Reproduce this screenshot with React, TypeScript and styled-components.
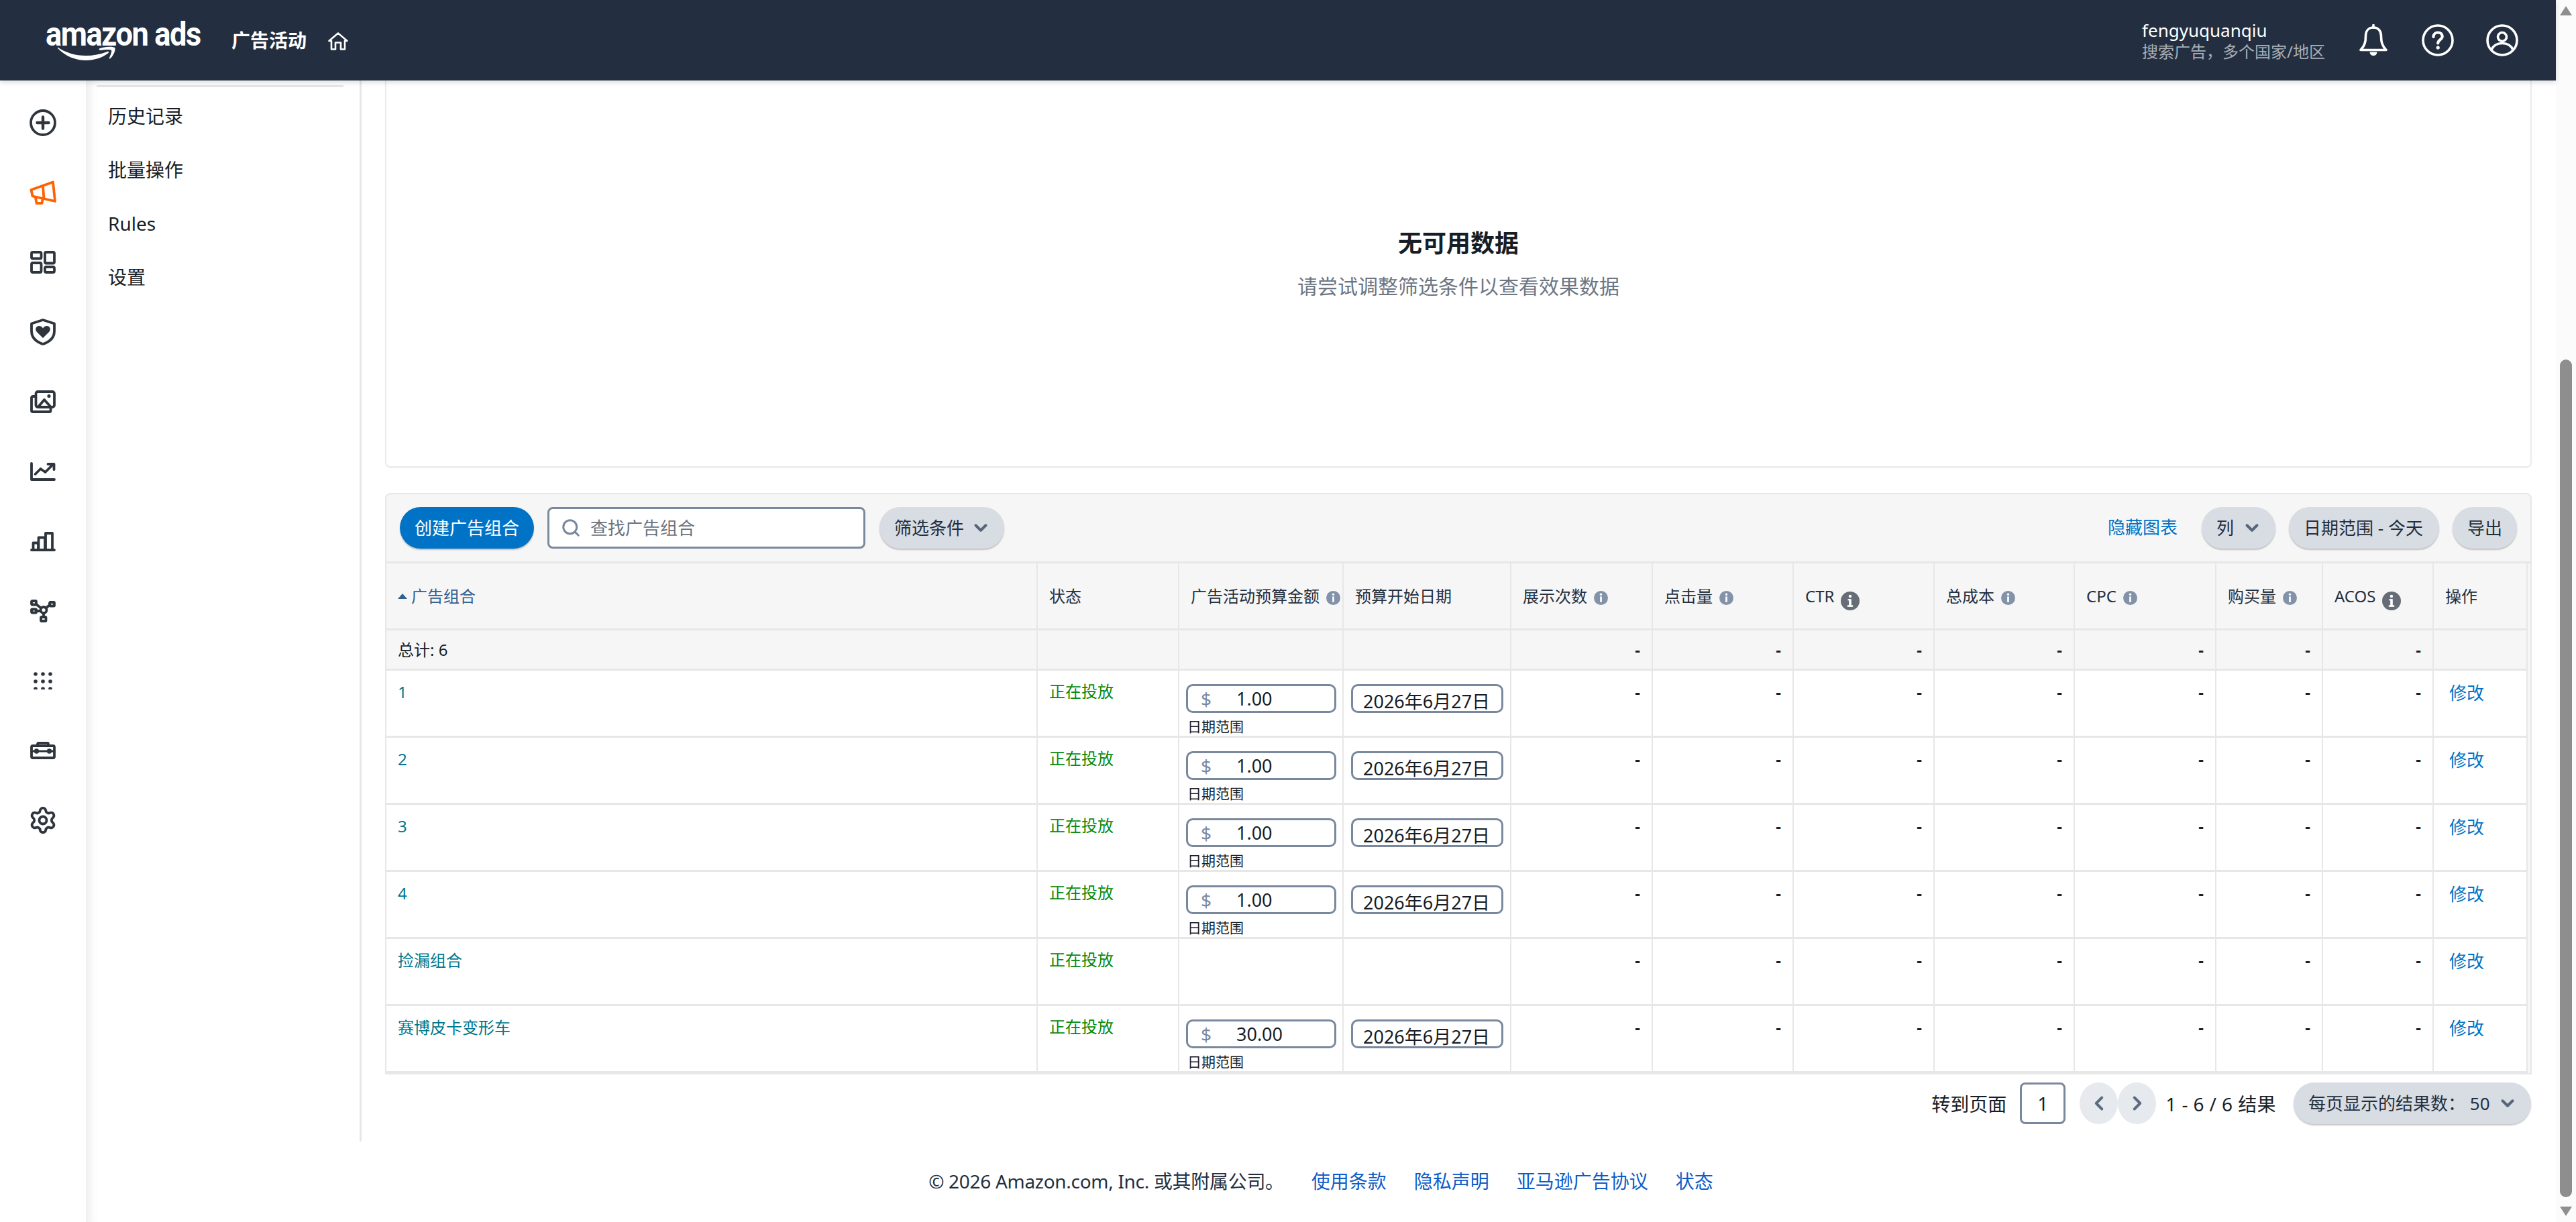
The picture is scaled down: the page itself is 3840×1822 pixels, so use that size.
import React from "react";
import styled, { createGlobalStyle } from "styled-components";
import { ChevronDown, ChevronLeft, ChevronRight, Search, Settings } from "lucide-react";

const Global = createGlobalStyle`
  html, body { margin: 0; padding: 0; height: 100%; overflow: hidden; background: #fff; }
  body { font-family: "Noto Sans", "Noto Sans CJK SC", sans-serif; color: #161d26; }
  * { box-sizing: border-box; }
`;

const INK = "#2f353d";
const SLATE = "#7a889e";

const Page = styled.div`
  display: flex;
  width: 3840px;
  height: 1822px;
  overflow: hidden;
`;
const Main = styled.div`
  display: flex;
  flex-direction: column;
  width: 3810px;
`;
const Header = styled.header`
  position: relative;
  z-index: 2;
  display: flex;
  align-items: center;
  height: 120px;
  flex: none;
  padding: 0 56px 0 68px;
  background: #232f40;
  box-shadow: 0 3px 7px rgba(0, 0, 0, 0.14);
  color: #fff;
`;
const Logo = styled.div`
  display: flex;
  flex-direction: column;
  width: 231px;
  margin-top: -2px;
`;
const LogoWord = styled.span`
  font-family: Roboto, "Noto Sans", sans-serif;
  font-weight: 700;
  font-size: 50px;
  line-height: 50px;
  letter-spacing: -1.6px;
  white-space: nowrap;
  transform: scaleX(0.905);
  transform-origin: left center;
`;
const LogoSmile = styled.svg`
  display: block;
  width: 86px;
  height: 23px;
  margin: -7px 0 0 18px;
`;
const Section = styled.span`
  margin-left: 46px;
  font-size: 28px;
  font-weight: 700;
  line-height: 38px;
`;
const HomeIcon = styled.svg`
  width: 30px;
  height: 27px;
  margin: 2px 0 0 32px;
`;
const HeaderSpacer = styled.div`
  flex: 1;
`;
const Account = styled.div`
  display: flex;
  flex-direction: column;
  margin-right: 51px;
  margin-top: 1px;
`;
const AccountName = styled.span`
  font-size: 26px;
  line-height: 32px;
`;
const AccountSub = styled.span`
  font-size: 24px;
  line-height: 32px;
  color: #a9aeb5;
`;
const HeadIcon = styled.svg<{ $w: number; $gap?: number }>`
  width: ${(p) => p.$w}px;
  height: 48px;
  margin-left: ${(p) => p.$gap ?? 0}px;
`;

const Body = styled.div`
  display: flex;
  flex: 1;
  min-height: 0;
`;
const Rail = styled.nav`
  display: flex;
  flex-direction: column;
  flex: none;
  width: 128px;
  padding-top: 11px;
`;
const RailItem = styled.div`
  display: flex;
  align-items: center;
  justify-content: center;
  height: 104px;
  color: ${INK};
`;
const Workspace = styled.div`
  display: flex;
  flex-direction: column;
  flex: 1;
  min-width: 0;
  box-shadow: inset 22px 0 18px -18px rgba(0, 0, 0, 0.09);
`;
const WorkRow = styled.div`
  display: flex;
`;
const SubNav = styled.div`
  flex: none;
  width: 411px;
  border-right: 3px solid #e6e6e6;
  padding-top: 7px;
`;
const SubNavRule = styled.div`
  height: 3px;
  width: 368px;
  margin: 0 0 3px 16px;
  background: #e6e6e6;
`;
const SubNavItem = styled.div`
  height: 80px;
  padding-left: 33px;
  font-size: 28px;
  line-height: 80px;
  color: #161d26;
`;
const Content = styled.main`
  display: flex;
  flex-direction: column;
  width: 3271px;
  padding: 0 36px 26px 35px;
`;
const ChartCard = styled.section`
  display: flex;
  flex-direction: column;
  align-items: center;
  height: 577px;
  padding-top: 218px;
  border: 2px solid #ececec;
  border-top: 0;
  border-radius: 0 0 8px 8px;
  box-shadow: 0 1px 2px rgba(0, 0, 0, 0.06);
`;
const EmptyTitle = styled.div`
  font-size: 36px;
  font-weight: 700;
  line-height: 50px;
  color: #161d26;
`;
const EmptyText = styled.div`
  margin-top: 18px;
  font-size: 30px;
  line-height: 42px;
  color: #6c7683;
`;
const TableCard = styled.section`
  margin-top: 38px;
  width: 3200px;
  border: 2px solid #e7e7e7;
  border-radius: 8px 8px 0 0;
  background: #f6f6f6;
`;
const Toolbar = styled.div`
  display: flex;
  align-items: flex-start;
  height: 103px;
  padding: 19px 20px 0 20px;
  border-bottom: 3px solid #e7e7e7;
`;
const Pill = styled.button<{ $primary?: boolean; $w: number; $gap?: number }>`
  display: flex;
  align-items: center;
  justify-content: space-between;
  flex: none;
  width: ${(p) => p.$w}px;
  height: 62px;
  margin-left: ${(p) => p.$gap ?? 0}px;
  padding: 0 20px 0 22px;
  border: 0;
  border-radius: 31px;
  background: ${(p) => (p.$primary ? "#0073c7" : "#d8dce3")};
  box-shadow: 0 2px 2px rgba(0, 0, 0, 0.22);
  color: ${(p) => (p.$primary ? "#fff" : "#232f3f")};
  font-family: inherit;
  font-size: 26px;
  line-height: 36px;
  white-space: nowrap;
`;
const SearchBox = styled.label`
  display: flex;
  align-items: center;
  flex: none;
  gap: 14px;
  width: 474px;
  height: 62px;
  margin-left: 20px;
  padding-left: 17px;
  border: 3px solid ${SLATE};
  border-radius: 8px;
  background: #fff;
  color: ${SLATE};
`;
const SearchInput = styled.input`
  flex: 1;
  min-width: 0;
  border: 0;
  outline: 0;
  padding: 0;
  background: transparent;
  font-family: inherit;
  font-size: 26px;
  &::placeholder {
    color: #6b7480;
    opacity: 1;
  }
`;
const ToolSpacer = styled.div`
  flex: 1;
`;
const HideLink = styled.a`
  margin-top: 12px;
  font-size: 26px;
  line-height: 36px;
  color: #0073c7;
`;
const Table = styled.table`
  table-layout: fixed;
  width: 3192px;
  border-collapse: separate;
  border-spacing: 0;
`;
const Th = styled.th<{ $w: number }>`
  width: ${(p) => p.$w}px;
  height: 100px;
  padding: 0 0 0 17px;
  border-right: 2px solid #e7e7e7;
  border-bottom: 3px solid #e7e7e7;
  text-align: left;
  vertical-align: middle;
  font-size: 24px;
  font-weight: 400;
  line-height: 34px;
  color: #232f3f;
`;
const ThInner = styled.span`
  display: flex;
  align-items: center;
  white-space: nowrap;
`;
const SortLabel = styled.span`
  display: flex;
  align-items: center;
  gap: 6px;
  color: #33608f;
`;
const SortArrow = styled.i`
  width: 0;
  height: 0;
  border-left: 7px solid transparent;
  border-right: 7px solid transparent;
  border-bottom: 8px solid #33608f;
`;
const InfoSvg = styled.svg<{ $big?: boolean }>`
  flex: none;
  width: ${(p) => (p.$big ? 28 : 21)}px;
  height: ${(p) => (p.$big ? 28 : 21)}px;
  margin-left: 10px;
  margin-top: ${(p) => (p.$big ? 14 : 6)}px;
`;
const Td = styled.td<{ $total?: boolean }>`
  height: ${(p) => (p.$total ? 60 : 100)}px;
  padding: 0;
  border-right: 2px solid #e7e7e7;
  border-bottom: 3px solid #e7e7e7;
  background: ${(p) => (p.$total ? "#f6f6f6" : "#fff")};
  vertical-align: top;
`;
const TotalLabel = styled.div`
  padding: 12px 0 0 17px;
  font-size: 24px;
  line-height: 34px;
  color: #161d26;
`;
const Name = styled.a`
  display: block;
  padding: 14px 0 0 17px;
  font-size: 24px;
  line-height: 36px;
  color: #00788c;
`;
const Status = styled.div`
  padding: 14px 0 0 17px;
  font-size: 24px;
  line-height: 34px;
  color: #0a8a0a;
`;
const Dash = styled.div<{ $total?: boolean }>`
  padding: ${(p) => (p.$total ? 12 : 15)}px 17px 0 0;
  text-align: right;
  font-size: 24px;
  font-weight: 700;
  line-height: 34px;
  color: #161d26;
`;
const Action = styled.a`
  display: block;
  padding: 15px 0 0 23px;
  font-size: 26px;
  line-height: 36px;
  color: #0073c7;
`;
const Field = styled.div<{ $w: number; $ml: number }>`
  display: flex;
  align-items: center;
  width: ${(p) => p.$w}px;
  height: 43px;
  margin: 20px 0 0 ${(p) => p.$ml}px;
  border: 3px solid ${SLATE};
  border-radius: 10px;
  background: #fff;
  font-size: 27px;
  color: #161d26;
`;
const Dollar = styled.span`
  width: 72px;
  padding-left: 19px;
  color: ${SLATE};
  font-size: 28px;
`;
const DateText = styled.span`
  padding: 6px 0 0 15px;
  font-size: 27px;
  white-space: nowrap;
`;
const Hint = styled.div`
  margin: 6px 0 0 12px;
  font-size: 21px;
  line-height: 28px;
  color: #161d26;
`;
const Pager = styled.div`
  display: flex;
  align-items: center;
  justify-content: flex-end;
  width: 3199px;
  margin-top: 12px;
  font-size: 28px;
  color: #161d26;
`;
const PageBox = styled.div`
  display: flex;
  align-items: center;
  justify-content: center;
  width: 68px;
  height: 62px;
  margin: 0 21px 0 20px;
  border: 3px solid ${SLATE};
  border-radius: 8px;
`;
const PageArrow = styled.div`
  display: flex;
  align-items: center;
  justify-content: center;
  width: 57px;
  height: 62px;
  border-radius: 50%;
  background: #e6e9ee;
  color: #5c6b82;
`;
const PageCount = styled.span`
  margin: 0 26px 0 14px;
  letter-spacing: 0.4px;
  white-space: nowrap;
`;
const Footer = styled.footer`
  display: flex;
  align-items: center;
  justify-content: center;
  flex: 1;
  padding-bottom: 4px;
  font-size: 28px;
  color: #232f3f;
`;
const Copyright = styled.span`
  letter-spacing: -0.3px;
`;
const FooterLink = styled.a`
  margin-left: 41px;
  color: #0f5cc8;
`;
const Track = styled.div`
  display: flex;
  flex-direction: column;
  align-items: center;
  flex: none;
  width: 30px;
  height: 100%;
  padding-top: 9px;
  background: #fbfbfb;
`;
const TrackArrow = styled.i<{ $down?: boolean }>`
  width: 0;
  height: 0;
  border-left: 9px solid transparent;
  border-right: 9px solid transparent;
  ${(p) => (p.$down ? "border-top: 14px solid #8e8e8e; margin-top: 14px;" : "border-bottom: 14px solid #8e8e8e;")}
`;
const Thumb = styled.div`
  width: 18px;
  height: 1249px;
  margin-top: 513px;
  border-radius: 9px;
  background: #8e8e8e;
`;

const RailSvg = ({ w, h, children, color }: { w: number; h: number; children: React.ReactNode; color?: string }) => (
  <svg
    width={w}
    height={h}
    viewBox={`0 0 ${w} ${h}`}
    fill="none"
    stroke={color ?? INK}
    strokeWidth={3.8}
    strokeLinecap="round"
    strokeLinejoin="round"
  >
    {children}
  </svg>
);

const railIcons: React.ReactNode[] = [
  <RailSvg key="plus" w={40} h={40}>
    <circle cx={20} cy={20} r={18} />
    <path d="M20 11.5v17M11.5 20h17" strokeWidth={4.4} />
  </RailSvg>,
  <RailSvg key="mega" w={40} h={36} color="#ff6200">
    <path d="M2.500 14 35 2.500l3 28.500L4.500 23.500Z" />
    <path d="M20 9l1.500 18" />
    <path d="M9 26l1.500 8h8l1-6" />
  </RailSvg>,
  <RailSvg key="dash" w={38} h={34}>
    <rect x={2} y={2} width={14.500} height={9.500} rx={2} />
    <rect x={22} y={2} width={14} height={16.500} rx={2} />
    <rect x={2} y={18} width={14.500} height={14} rx={2} />
    <rect x={22} y={24} width={14} height={8} rx={2} />
  </RailSvg>,
  <RailSvg key="shield" w={38} h={40}>
    <path d="M19 2 36 7.500V19C36 29 28 35 19 38 10 35 2 29 2 19V7.500Z" />
    <path
      d="M19 29 9.500 19.500C6.500 15.500 9 11 13 11c3 0 5 1.700 6 3.500 1-1.800 3-3.500 6-3.500 4 0 6.500 4.500 3.500 8.500Z"
      fill={INK}
      stroke="none"
    />
  </RailSvg>,
  <RailSvg key="img" w={38} h={34}>
    <rect x={8.500} y={2} width={27.500} height={23} rx={3} />
    <path d="M8 9H4a2 2 0 0 0-2 2v19a2 2 0 0 0 2 2h24.500a2 2 0 0 0 2-2v-5" />
    <path d="M12.500 24l8.500-10 9 10" />
    <circle cx={28} cy={8.500} r={2.600} fill={INK} stroke="none" />
  </RailSvg>,
  <RailSvg key="chart" w={38} h={28}>
    <path d="M2 2V26H36" />
    <path d="M7.500 18l8-8 7 5L34 3.500" />
    <path d="M26.500 3H35.500V11" />
  </RailSvg>,
  <RailSvg key="bars" w={38} h={29}>
    <path d="M2 27H36" />
    <path d="M4.500 27V16.500h7.500V27M12.500 27V8.500h9.500V27M23 27V2h10V27" />
  </RailSvg>,
  <RailSvg key="nodes" w={38} h={34}>
    <circle cx={20} cy={15.500} r={4.500} />
    <rect x={2} y={2} width={7} height={5.500} rx={1} />
    <rect x={29} y={4} width={7} height={5.500} rx={1} />
    <rect x={2} y={14.500} width={7} height={5} rx={1} />
    <rect x={16} y={26} width={7.500} height={6} rx={1} />
    <path d="M9 7l7 5.500M29 8l-5.500 4.500M9 17h6.500M20 20v6" />
  </RailSvg>,
  <svg key="dots" width={28} height={26} viewBox="0 0 28 26" fill={INK}>
    {[3, 14, 25].map((cy) => [3, 14, 25].map((cx) => <circle key={`${cx}-${cy}`} cx={cx} cy={cy} r={2.800} />))}
  </svg>,
  <RailSvg key="tool" w={38} h={26}>
    <rect x={2} y={6} width={34} height={18} rx={2} />
    <path d="M11 6V3.500a2 2 0 0 1 2-2h12a2 2 0 0 1 2 2V6" />
    <path d="M2 14H36" strokeWidth={3.200} />
    <circle cx={9.500} cy={14} r={1.800} fill={INK} />
    <circle cx={28.500} cy={14} r={1.800} fill={INK} />
  </RailSvg>,
  <Settings key="gear" size={44} strokeWidth={2.100} color={INK} />,
];

const subNav = ["历史记录", "批量操作", "Rules", "设置"];

const Info = ({ big }: { big?: boolean }) => (
  <InfoSvg $big={big} viewBox="0 0 20 20">
    <circle cx={10} cy={10} r={10} fill={big ? "#666d76" : "#8292a8"} />
    <circle cx={10} cy={5} r={1.600} fill="#fff" />
    <rect x={8.700} y={8} width={2.600} height={8} fill="#fff" />
    {big && <rect x={7} y={14.500} width={6} height={1.800} fill="#fff" />}
    {big && <rect x={7.500} y={8} width={2.500} height={1.500} fill="#fff" />}
  </InfoSvg>
);

type Col = { w: number; label: string; info?: "small" | "big" };
const metricCols: Col[] = [
  { w: 211, label: "展示次数", info: "small" },
  { w: 210, label: "点击量", info: "small" },
  { w: 210, label: "CTR", info: "big" },
  { w: 209, label: "总成本", info: "small" },
  { w: 211, label: "CPC", info: "small" },
  { w: 159, label: "购买量", info: "small" },
  { w: 165, label: "ACOS", info: "big" },
];

type Row = { name: string; budget?: string };
const rows: Row[] = [
  { name: "1", budget: "1.00" },
  { name: "2", budget: "1.00" },
  { name: "3", budget: "1.00" },
  { name: "4", budget: "1.00" },
  { name: "捡漏组合" },
  { name: "赛博皮卡变形车", budget: "30.00" },
];

const Chevron = () => <ChevronDown size={30} strokeWidth={3.200} color="#566579" />;

export default function App() {
  return (
    <Page>
      <Global />
      <Main>
        <Header>
          <Logo>
            <LogoWord>amazon ads</LogoWord>
            <LogoSmile viewBox="0 0 86 23">
              <path
                fill="#fff"
                d="M0 1.500C18 14 46 19 74 8c2-.800 3 1 1 2.500C56 25 22 26 0 3c-.600-1 0-2 0-1.500Z"
              />
              <path
                fill="#fff"
                d="M62 3.500C70 0 84 0 85.500 2.500 86.500 7 82 15 78.500 18c-1 1-2 .500-1.500-1 2-4.500 4-9 3-11-1-1.500-10-1-15.500 0-2 .200-3.500-1.200-2.500-2.500Z"
              />
            </LogoSmile>
          </Logo>
          <Section>广告活动</Section>
          <HomeIcon viewBox="0 0 30 27" fill="none" stroke="#fff" strokeWidth={2.600} strokeLinejoin="round">
            <path d="M1.500 13 15 1.500 28.500 13H25V25.500H19V15.500H11V25.500H5V13Z" />
          </HomeIcon>
          <HeaderSpacer />
          <Account>
            <AccountName>fengyuquanqiu</AccountName>
            <AccountSub>搜索广告，多个国家/地区</AccountSub>
          </Account>
          <HeadIcon $w={42} viewBox="0 0 42 48" fill="none" stroke="#fff" strokeWidth={3.600} strokeLinejoin="round">
            <path d="M21 5c-7.500 0-11.500 5.500-11.500 13 0 9-1.500 14-7.500 20.500h38C34 32 32.500 27 32.500 18 32.500 10.500 28.500 5 21 5Z" />
            <path d="M21 5V1.500" strokeLinecap="round" />
            <path d="M15.500 41.500a5.500 5.500 0 0 0 11 0Z" fill="#fff" stroke="none" />
          </HeadIcon>
          <HeadIcon $w={48} $gap={51} viewBox="0 0 48 48" fill="none" stroke="#fff" strokeWidth={3.600} strokeLinecap="round">
            <circle cx={24} cy={24} r={22} />
            <path d="M17.500 19c0-4 3-6.500 6.700-6.500 3.800 0 6.500 2.500 6.500 5.700 0 4.800-6.500 5-6.500 10.300" strokeWidth={4.200} />
            <circle cx={24.200} cy={35} r={2.600} fill="#fff" stroke="none" />
          </HeadIcon>
          <HeadIcon $w={48} $gap={48} viewBox="0 0 48 48" fill="none" stroke="#fff" strokeWidth={3.600}>
            <circle cx={24} cy={24} r={22} />
            <circle cx={24} cy={19} r={6.500} />
            <path d="M8 38c3-6.500 9-9.500 16-9.500S37 31.500 40 38" />
          </HeadIcon>
        </Header>
        <Body>
          <Rail>
            {railIcons.map((icon, i) => (
              <RailItem key={i}>{icon}</RailItem>
            ))}
          </Rail>
          <Workspace>
            <WorkRow>
              <SubNav>
                <SubNavRule />
                {subNav.map((item) => (
                  <SubNavItem key={item}>{item}</SubNavItem>
                ))}
              </SubNav>
              <Content>
                <ChartCard>
                  <EmptyTitle>无可用数据</EmptyTitle>
                  <EmptyText>请尝试调整筛选条件以查看效果数据</EmptyText>
                </ChartCard>
                <TableCard>
                  <Toolbar>
                    <Pill $primary $w={200}>创建广告组合</Pill>
                    <SearchBox>
                      <Search size={30} strokeWidth={2.400} />
                      <SearchInput placeholder="查找广告组合" />
                    </SearchBox>
                    <Pill $w={186} $gap={21}>筛选条件<Chevron /></Pill>
                    <ToolSpacer />
                    <HideLink>隐藏图表</HideLink>
                    <Pill $w={110} $gap={36}>列<Chevron /></Pill>
                    <Pill $w={224} $gap={20}>日期范围 - 今天</Pill>
                    <Pill $w={96} $gap={20}>导出</Pill>
                  </Toolbar>
                  <Table>
                    <thead>
                      <tr>
                        <Th $w={971}>
                          <SortLabel><SortArrow />广告组合</SortLabel>
                        </Th>
                        <Th $w={211}>状态</Th>
                        <Th $w={245}><ThInner>广告活动预算金额<Info /></ThInner></Th>
                        <Th $w={250}>预算开始日期</Th>
                        {metricCols.map((c) => (
                          <Th $w={c.w} key={c.label}>
                            <ThInner>{c.label}<Info big={c.info === "big"} /></ThInner>
                          </Th>
                        ))}
                        <Th $w={140}>操作</Th>
                      </tr>
                    </thead>
                    <tbody>
                      <tr>
                        <Td $total><TotalLabel>总计: 6</TotalLabel></Td>
                        <Td $total />
                        <Td $total />
                        <Td $total />
                        {metricCols.map((c) => (
                          <Td $total key={c.label}><Dash $total>-</Dash></Td>
                        ))}
                        <Td $total />
                      </tr>
                      {rows.map((r) => (
                        <tr key={r.name}>
                          <Td><Name>{r.name}</Name></Td>
                          <Td><Status>正在投放</Status></Td>
                          <Td>
                            {r.budget && (
                              <>
                                <Field $w={224} $ml={10}>
                                  <Dollar>$</Dollar>
                                  {r.budget}
                                </Field>
                                <Hint>日期范围</Hint>
                              </>
                            )}
                          </Td>
                          <Td>
                            {r.budget && (
                              <Field $w={227} $ml={11}>
                                <DateText>2026年6月27日</DateText>
                              </Field>
                            )}
                          </Td>
                          {metricCols.map((c) => (
                            <Td key={c.label}><Dash>-</Dash></Td>
                          ))}
                          <Td><Action>修改</Action></Td>
                        </tr>
                      ))}
                    </tbody>
                  </Table>
                </TableCard>
                <Pager>
                  <span>转到页面</span>
                  <PageBox>1</PageBox>
                  <PageArrow><ChevronLeft size={34} strokeWidth={2.800} /></PageArrow>
                  <PageArrow><ChevronRight size={34} strokeWidth={2.800} /></PageArrow>
                  <PageCount>1 - 6 / 6 结果</PageCount>
                  <Pill $w={354}>每页显示的结果数： 50<Chevron /></Pill>
                </Pager>
              </Content>
            </WorkRow>
            <Footer>
              <Copyright>© 2026 Amazon.com, Inc. 或其附属公司。</Copyright>
              <FooterLink>使用条款</FooterLink>
              <FooterLink>隐私声明</FooterLink>
              <FooterLink>亚马逊广告协议</FooterLink>
              <FooterLink>状态</FooterLink>
            </Footer>
          </Workspace>
        </Body>
      </Main>
      <Track>
        <TrackArrow />
        <Thumb />
        <TrackArrow $down />
      </Track>
    </Page>
  );
}
